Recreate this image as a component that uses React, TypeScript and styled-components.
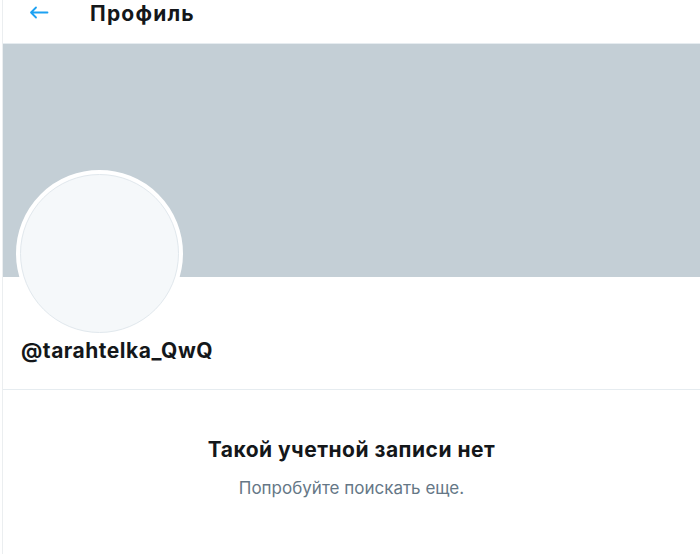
import React from 'react';
import styled, { createGlobalStyle } from 'styled-components';

const GlobalStyle = createGlobalStyle`
  html, body {
    margin: 0;
    padding: 0;
    background: #ffffff;
    font-family: Inter, "Liberation Sans", Arial, sans-serif;
    color: #14171a;
  }
`;

const Column = styled.main`
  margin-left: 2px;
  border-left: 1px solid #ebeef0;
  min-height: 554px;
  display: flex;
  flex-direction: column;
`;

const Header = styled.header`
  height: 43px;
  border-bottom: 1px solid #e6ecf0;
  display: flex;
  align-items: flex-start;
  padding-left: 26px;
  gap: 41px;
`;

const BackButton = styled.button`
  border: none;
  background: transparent;
  padding: 0;
  margin-top: 6px;
  width: 20px;
  height: 13px;
  color: #1da1f2;
  cursor: pointer;
  display: flex;
  svg {
    width: 20px;
    height: 13px;
  }
`;

const Title = styled.h2`
  margin: 1px 0 0;
  font-size: 21px;
  line-height: 26px;
  letter-spacing: 1.2px;
  font-weight: 700;
`;

const Banner = styled.div`
  height: 233px;
  background: #c4cfd6;
`;

const ProfileInfo = styled.section`
  display: flex;
  flex-direction: column;
  padding: 0 0 25px 13px;
  border-bottom: 1px solid #e6ecf0;
`;

const Avatar = styled.div`
  width: 159px;
  height: 159px;
  margin-top: -107px;
  border-radius: 50%;
  border: 4px solid #ffffff;
  background: #ffffff;
  display: flex;
`;

const AvatarInner = styled.div`
  flex: 1;
  border-radius: 50%;
  background: #f5f8fa;
  border: 1px solid #e1e8ed;
`;

const Handle = styled.div`
  margin: 1px 0 0 5px;
  font-size: 21px;
  line-height: 26px;
  letter-spacing: 0.5px;
  font-weight: 700;
`;

const Empty = styled.section`
  display: flex;
  flex-direction: column;
  align-items: center;
  padding-top: 47px;
  gap: 14px;
`;

const EmptyTitle = styled.div`
  font-size: 21px;
  line-height: 26px;
  letter-spacing: 0.5px;
  font-weight: 700;
`;

const EmptyText = styled.div`
  font-size: 17px;
  line-height: 22px;
  color: #657786;
`;

export default function App() {
  return (
    <>
      <GlobalStyle />
      <Column>
        <Header>
          <BackButton aria-label="Назад">
            <svg viewBox="0 0 20 13" fill="none" stroke="currentColor" strokeWidth="1.8" strokeLinecap="round" strokeLinejoin="round">
              <path d="M18.5 6.5H2 M7 1.5L2 6.5L7 11.5" />
            </svg>
          </BackButton>
          <Title>Профиль</Title>
        </Header>
        <Banner />
        <ProfileInfo>
          <Avatar>
            <AvatarInner />
          </Avatar>
          <Handle>@tarahtelka_QwQ</Handle>
        </ProfileInfo>
        <Empty>
          <EmptyTitle>Такой учетной записи нет</EmptyTitle>
          <EmptyText>Попробуйте поискать еще.</EmptyText>
        </Empty>
      </Column>
    </>
  );
}
